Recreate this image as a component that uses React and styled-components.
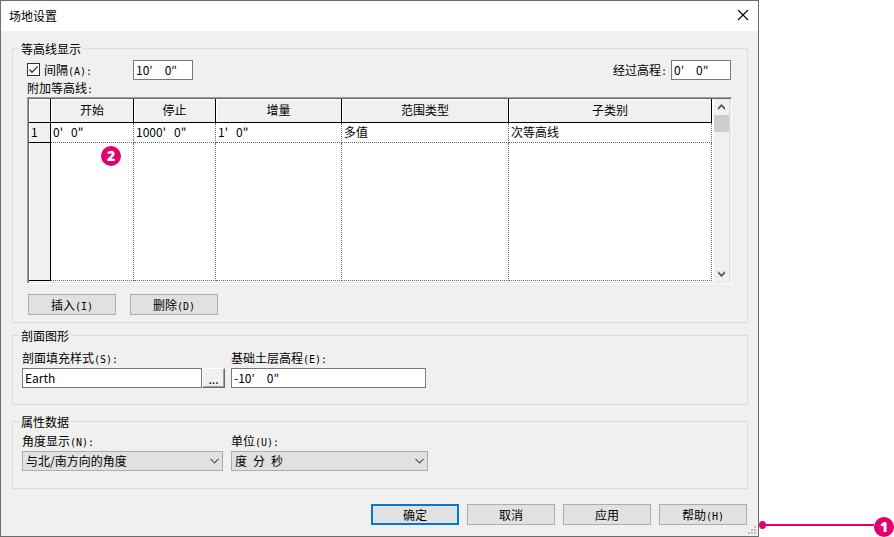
import React, { useState } from 'react';
import styled, { createGlobalStyle, css } from 'styled-components';

const GlobalStyle = createGlobalStyle`
  * {
    box-sizing: border-box;
  }

  body {
    margin: 0;
    background: #fff;
    color: #000;
    font-family: 'Noto Sans CJK SC', sans-serif;
    font-size: 12px;
    line-height: 15px;
  }

  button, input, select {
    margin: 0;
    color: inherit;
    font: inherit;
    border-radius: 0;
  }
`;

const Page = styled.div`
  display: grid;
  grid-template-columns: minmax(0, 1fr) 135px;
  min-height: 100vh;
`;

const Dialog = styled.main`
  position: relative;
  background: #f0f0f0;
  border: 1px solid #6d6d6d;
`;

const TitleBar = styled.header`
  display: flex;
  align-items: center;
  justify-content: space-between;
  height: 30px;
  padding: 0 9px 2px 8px;
  background: #fff;
`;

const Title = styled.h1`
  margin: 0;
  font-size: 12px;
  font-weight: 400;
`;

const CloseButton = styled.button`
  display: flex;
  padding: 0;
  border: 0;
  background: none;
`;

const Body = styled.form`
  padding: 10px 10px 11px 11px;
`;

const Group = styled.fieldset`
  min-width: 0;
  margin: 0 0 ${({ $gap }) => $gap}px;
  padding: ${({ $padding }) => $padding};
  border: 1px solid #dcdcdc;

  > legend {
    margin-left: ${({ $legend }) => $legend}px;
    padding: 0 2px;
  }
`;

const Mono = styled.span`
  font-family: 'DejaVu Sans Mono', monospace;
  font-size: 10px;
  line-height: 1;
`;

const TopRow = styled.div`
  display: flex;
  align-items: center;
  padding-right: 1px;
`;

const CheckLabel = styled.label`
  display: flex;
  align-items: center;
  gap: 4px;
  width: 106px;
  padding-bottom: 2px;
`;

const CheckBox = styled.span`
  display: grid;

  > * {
    grid-area: 1 / 1;
  }

  input {
    width: 13px;
    height: 13px;
    appearance: none;
    background: #fff;
    border: 1px solid #333;
  }

  svg {
    visibility: hidden;
    pointer-events: none;
  }

  input:checked + svg {
    visibility: visible;
  }
`;

const InlineLabel = styled.label`
  margin: 0 4px 0 auto;
  padding-bottom: 2px;
`;

const TextInput = styled.input`
  width: ${({ $width }) => $width};
  min-width: 0;
  height: 20px;
  padding: 0 2px 2px;
  background: #fff;
  border: 1px solid #7a7a7a;
  outline: none;
`;

const GridFrame = styled.div`
  display: flex;
  gap: 2px;
  height: 187px;
  margin-top: 2px;
  background: #fff;
  border: 1px solid;
  border-color: #a0a0a0 #fff #fff #a0a0a0;
  box-shadow: inset 1px 1px #696969, inset -1px -1px #e3e3e3;
  padding: 1px;
`;

const Table = styled.table`
  flex: 1;
  width: 0;
  height: 182px;
  table-layout: fixed;
  border-spacing: 0;
`;

const line = css`
  border: 0 dotted #696969;
  border-width: 0 1px 1px 0;
`;

const HeadCell = styled.th`
  height: 24px;
  padding: 0 0 2px;
  background: #f0f0f0;
  border: solid #000;
  border-width: 0 1px 1px 0;
  box-shadow: inset 1px 1px #fff;
  font-weight: 400;
`;

const RowHead = styled.th`
  padding: 0 2px 2px;
  background: #f0f0f0;
  border: solid #000;
  border-width: 0 1px 1px 0;
  box-shadow: inset 1px 0 #fff;
  font-weight: 400;
  text-align: left;
`;

const Cell = styled.td`
  position: relative;
  height: ${({ $blank }) => ($blank ? 'auto' : '20px')};
  padding: 0 2px 2px;
  white-space: pre;
  ${line}
`;

const ScrollBar = styled.div`
  display: flex;
  flex-direction: column;
  width: 16px;
  background: #f0f0f0;
  border-right: 1px solid #e3e3e3;
`;

const ScrollArrow = styled.button`
  display: grid;
  place-items: center;
  height: 16px;
  padding: 0;
  border: 0;
  background: none;
`;

const ScrollTrack = styled.div`
  flex: 1;

  &::before {
    content: '';
    display: block;
    height: 17px;
    background: #cdcdcd;
  }
`;

const ButtonRow = styled.div`
  display: flex;
  gap: ${({ $gap }) => $gap}px;
  justify-content: ${({ $end }) => ($end ? 'flex-end' : 'flex-start')};
  padding: 0 1px;
  margin-top: ${({ $end }) => ($end ? 0 : 10)}px;
`;

const PushButton = styled.button`
  width: 88px;
  height: 21px;
  padding: 0;
  line-height: 15px;
  background: #e1e1e1;
  border: ${({ $primary }) => ($primary ? '2px solid #0078d7' : '1px solid #adadad')};
`;

const BrowseButton = styled.button`
  width: 23px;
  height: 20px;
  padding: 0;
  line-height: 15px;
  background: #f0f0f0;
  border: 1px solid;
  border-color: #fff #696969 #696969 #fff;
  box-shadow: inset -1px -1px #a0a0a0;
`;

const FieldRow = styled.div`
  display: grid;
  grid-template-columns: 203px 197px;
  gap: 6px;
`;

const Field = styled.div`
  display: flex;
  flex-direction: column;
  gap: 3px;
`;

const Joined = styled.div`
  display: flex;
`;

const SelectBox = styled.div`
  display: grid;
  align-items: center;
  width: ${({ $width }) => $width};

  > * {
    grid-area: 1 / 1;
  }

  svg {
    justify-self: end;
    margin-right: 4px;
    pointer-events: none;
  }
`;

const Select = styled.select`
  height: 20px;
  padding: 0 20px 2px 3px;
  appearance: none;
  background: #e1e1e1;
  border: 1px solid #adadad;
`;

const Grip = styled.svg`
  position: absolute;
  right: 2px;
  bottom: 2px;
`;

const Badge = styled.span`
  display: grid;
  place-items: center;
  flex: none;
  width: 20px;
  height: 20px;
  border-radius: 50%;
  background: #e2006f;
  color: #fff;
  font-family: 'Open Sans', sans-serif;
  font-size: 14px;
  font-weight: 800;
  line-height: 20px;
`;

const CellBadge = styled(Badge)`
  position: absolute;
  top: 3px;
  left: 50px;
`;

const Callout = styled.aside`
  display: flex;
  align-items: flex-end;
`;

const Leader = styled.div`
  display: flex;
  align-items: center;
  flex: 1;
  margin-bottom: 8px;

  &::before {
    content: '';
    width: 7px;
    height: 8px;
    border-radius: 50%;
    background: #e2006f;
  }

  &::after {
    content: '';
    flex: 1;
    height: 2px;
    background: #e2006f;
  }
`;

const columns = [
  { title: '开始', width: 83 },
  { title: '停止', width: 82 },
  { title: '增量', width: 126 },
  { title: '范围类型', width: 167 },
  { title: '子类别' },
];

const rows = [["0'   0\"", "1000'   0\"", "1'   0\"", '多值', '次等高线']];

// feet and inches, kept apart by an em space
const feet = (value) => `${value}′\u20030″`;

const Chevron = () => (
  <svg width="9" height="6" viewBox="0 0 9 6" fill="none" stroke="#555" strokeWidth="1.2">
    <path d="M0.5 0.8 4.5 4.8 8.5 0.8" />
  </svg>
);

const ArrowIcon = ({ up }) => (
  <svg width="7" height="6" viewBox="0 0 7 6" fill="#555">
    <path d={up ? 'M3.5 0 7 3.5V6L3.5 2.5 0 6V3.5Z' : 'M3.5 6 7 2.5V0L3.5 3.5 0 0V2.5Z'} />
  </svg>
);

const Key = ({ children }) => <Mono>({children})</Mono>;

const ContourTable = () => (
  <GridFrame>
    <Table>
      <colgroup>
        <col style={{ width: 22 }} />
        {columns.map((col) => (
          <col key={col.title} style={{ width: col.width }} />
        ))}
      </colgroup>
      <thead>
        <tr>
          <HeadCell />
          {columns.map((col) => (
            <HeadCell key={col.title} scope="col">{col.title}</HeadCell>
          ))}
        </tr>
      </thead>
      <tbody>
        {rows.map((row, i) => (
          <tr key={i}>
            <RowHead scope="row">{i + 1}</RowHead>
            {row.map((value, j) => (
              <Cell key={j}>{value}</Cell>
            ))}
          </tr>
        ))}
        <tr>
          <RowHead />
          {columns.map((col, i) => (
            <Cell key={col.title} $blank>{i === 0 && <CellBadge>2</CellBadge>}</Cell>
          ))}
        </tr>
      </tbody>
    </Table>
    <ScrollBar>
      <ScrollArrow type="button" aria-label="向上滚动"><ArrowIcon up /></ScrollArrow>
      <ScrollTrack />
      <ScrollArrow type="button" aria-label="向下滚动"><ArrowIcon /></ScrollArrow>
    </ScrollBar>
  </GridFrame>
);

const App = () => {
  const [interval, setInterval] = useState(true);

  return (
    <Page>
      <GlobalStyle />
      <Dialog>
        <TitleBar>
          <Title>场地设置</Title>
          <CloseButton type="button" aria-label="关闭">
            <svg width="12" height="12" viewBox="0 0 12 12" stroke="#000" strokeWidth="1.1">
              <path d="M1 1 11 11M11 1 1 11" />
            </svg>
          </CloseButton>
        </TitleBar>

        <Body onSubmit={(e) => e.preventDefault()}>
          <Group $gap={5} $legend={-8} $padding="4px 15px 7px 14px">
            <legend>等高线显示</legend>
            <TopRow>
              <CheckLabel>
                <CheckBox>
                  <input
                    type="checkbox"
                    checked={interval}
                    onChange={(e) => setInterval(e.target.checked)}
                  />
                  <svg width="13" height="13" viewBox="0 0 13 13" fill="none" stroke="#333" strokeWidth="1.3">
                    <path d="M2.5 6.5 5 9.2 10.7 3.4" />
                  </svg>
                </CheckBox>
                <span>间隔<Key>A</Key><Mono>:</Mono></span>
              </CheckLabel>
              <TextInput $width="60px" aria-label="间隔" defaultValue={feet('10')} />
              <InlineLabel htmlFor="elevation">经过高程<Mono>:</Mono></InlineLabel>
              <TextInput $width="60px" id="elevation" defaultValue={feet('0')} />
            </TopRow>
            <div>附加等高线<Mono>:</Mono></div>
            <ContourTable />
            <ButtonRow $gap={14}>
              <PushButton type="button">插入<Key>I</Key></PushButton>
              <PushButton type="button">删除<Key>D</Key></PushButton>
            </ButtonRow>
          </Group>

          <Group $gap={9} $legend={-3} $padding="7px 9px 16px">
            <legend>剖面图形</legend>
            <FieldRow>
              <Field>
                <label htmlFor="fill">剖面填充样式<Key>S</Key><Mono>:</Mono></label>
                <Joined>
                  <TextInput $width="180px" id="fill" defaultValue="Earth" />
                  <BrowseButton type="button">...</BrowseButton>
                </Joined>
              </Field>
              <Field>
                <label htmlFor="base">基础土层高程<Key>E</Key><Mono>:</Mono></label>
                <TextInput $width="195px" id="base" defaultValue={feet('-10')} />
              </Field>
            </FieldRow>
          </Group>

          <Group $gap={15} $legend={-3} $padding="4px 9px 17px">
            <legend>属性数据</legend>
            <FieldRow>
              <Field>
                <label htmlFor="angle">角度显示<Key>N</Key><Mono>:</Mono></label>
                <SelectBox $width="201px">
                  <Select id="angle"><option>与北/南方向的角度</option></Select>
                  <Chevron />
                </SelectBox>
              </Field>
              <Field>
                <label htmlFor="units">单位<Key>U</Key><Mono>:</Mono></label>
                <SelectBox $width="197px">
                  <Select id="units"><option>度&ensp;分&ensp;秒</option></Select>
                  <Chevron />
                </SelectBox>
              </Field>
            </FieldRow>
          </Group>

          <ButtonRow $gap={8} $end>
            <PushButton type="submit" $primary>确定</PushButton>
            <PushButton type="button">取消</PushButton>
            <PushButton type="button">应用</PushButton>
            <PushButton type="button">帮助<Key>H</Key></PushButton>
          </ButtonRow>
        </Body>

        <Grip width="8" height="8" viewBox="0 0 8 8" fill="#bfbfbf">
          <path d="M6 0h2v2H6zM3 3h2v2H3zM6 3h2v2H6zM0 6h2v2H0zM3 6h2v2H3zM6 6h2v2H6z" />
        </Grip>
      </Dialog>

      <Callout>
        <Leader />
        <Badge>1</Badge>
      </Callout>
    </Page>
  );
};

export default App;
